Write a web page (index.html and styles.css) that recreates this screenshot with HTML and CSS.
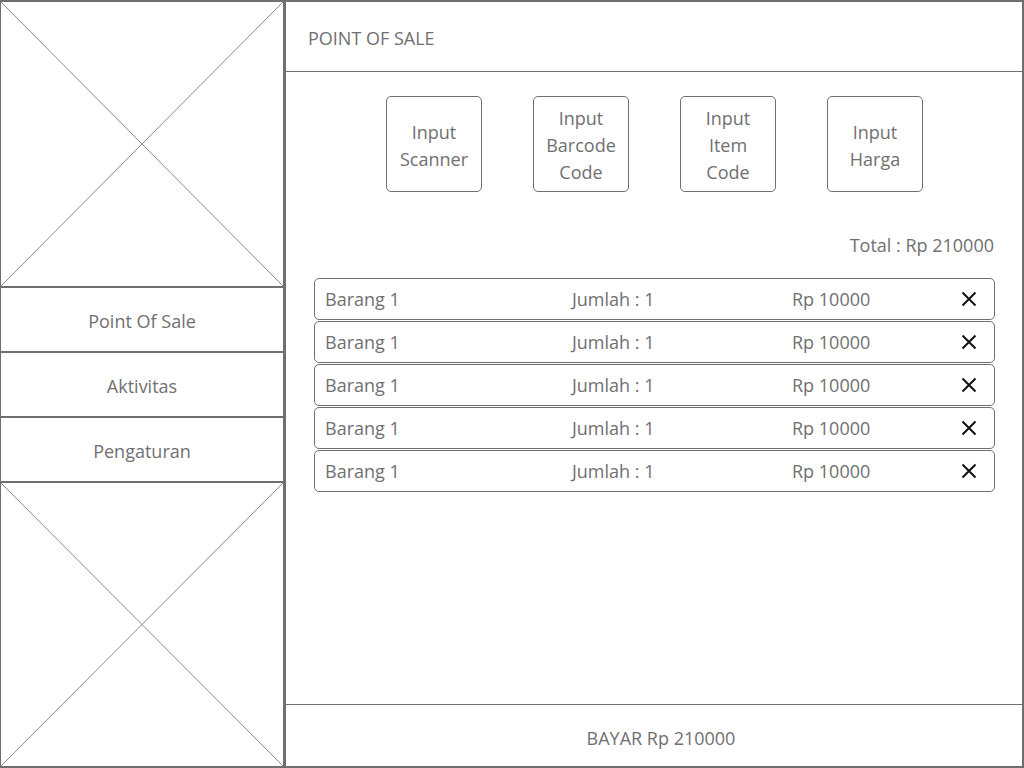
FILE: index.html
```html
<!DOCTYPE html>
<html>
<head>
<meta charset="utf-8">
<link rel="stylesheet" href="styles.css">
</head>
<body>
<div class="app">
  <aside class="sidebar">
    <div class="ph ph-top">
      <svg class="ph-svg" viewBox="0 0 100 100" preserveAspectRatio="none"><line x1="0" y1="0" x2="100" y2="100" vector-effect="non-scaling-stroke"/><line x1="100" y1="0" x2="0" y2="100" vector-effect="non-scaling-stroke"/></svg>
    </div>
    <div class="nav-item">Point Of Sale</div>
    <div class="nav-item">Aktivitas</div>
    <div class="nav-item">Pengaturan</div>
    <div class="ph ph-bottom">
      <svg class="ph-svg" viewBox="0 0 100 100" preserveAspectRatio="none"><line x1="0" y1="0" x2="100" y2="100" vector-effect="non-scaling-stroke"/><line x1="100" y1="0" x2="0" y2="100" vector-effect="non-scaling-stroke"/></svg>
    </div>
  </aside>
  <main class="main">
    <header class="header">POINT OF SALE</header>
    <section class="content">
      <div class="inputs">
        <div class="btn">Input<br>Scanner</div>
        <div class="btn">Input<br>Barcode<br>Code</div>
        <div class="btn">Input<br>Item<br>Code</div>
        <div class="btn">Input<br>Harga</div>
      </div>
      <div class="total">Total : Rp 210000</div>
      <div class="rows">
        <div class="row"><span>Barang 1</span><span>Jumlah : 1</span><span>Rp 10000</span><svg class="x" viewBox="0 0 16 16"><path d="M1.5 1.5L14.5 14.5M14.5 1.5L1.5 14.5"/></svg></div>
        <div class="row"><span>Barang 1</span><span>Jumlah : 1</span><span>Rp 10000</span><svg class="x" viewBox="0 0 16 16"><path d="M1.5 1.5L14.5 14.5M14.5 1.5L1.5 14.5"/></svg></div>
        <div class="row"><span>Barang 1</span><span>Jumlah : 1</span><span>Rp 10000</span><svg class="x" viewBox="0 0 16 16"><path d="M1.5 1.5L14.5 14.5M14.5 1.5L1.5 14.5"/></svg></div>
        <div class="row"><span>Barang 1</span><span>Jumlah : 1</span><span>Rp 10000</span><svg class="x" viewBox="0 0 16 16"><path d="M1.5 1.5L14.5 14.5M14.5 1.5L1.5 14.5"/></svg></div>
        <div class="row"><span>Barang 1</span><span>Jumlah : 1</span><span>Rp 10000</span><svg class="x" viewBox="0 0 16 16"><path d="M1.5 1.5L14.5 14.5M14.5 1.5L1.5 14.5"/></svg></div>
      </div>
    </section>
    <footer class="footer">BAYAR Rp 210000</footer>
  </main>
</div>
</body>
</html>
```

FILE: styles.css
```css
* { box-sizing: border-box; }
html, body { margin: 0; padding: 0; background: #fff; }
body {
  font-family: "Open Sans", "Noto Sans", sans-serif;
  color: #707070;
  font-size: 18px;
}
.app {
  width: 1024px;
  height: 768px;
  display: grid;
  grid-template-columns: 283px 1fr;
  border-top: 2px solid #6f6f6f;
  border-bottom: 2px solid #6f6f6f;
  border-left: 1px solid #6f6f6f;
  border-right: 2px solid #6f6f6f;
}
.sidebar {
  display: flex;
  flex-direction: column;
  border-right: 1px solid #6f6f6f;
  min-height: 0;
}
.ph { position: relative; }
.ph-top { height: 284px; }
.ph-bottom { flex: 1; }
.ph-svg {
  display: block;
  width: 100%;
  height: 100%;
}
.ph-svg line { stroke: #8a8a8a; stroke-width: 1; }
.nav-item {
  height: 65px;
  border-top: 2px solid #6f6f6f;
  display: flex;
  align-items: center;
  justify-content: center;
  font-size: 18px;
  padding-top: 2px;
}
.nav-item + .ph { border-top: 2px solid #6f6f6f; }
.main {
  display: flex;
  flex-direction: column;
  border-left: 2px solid #6f6f6f;
  min-height: 0;
}
.header {
  height: 70px;
  border-bottom: 1px solid #6f6f6f;
  display: flex;
  align-items: center;
  padding-left: 22px;
  padding-top: 2px;
  font-size: 18px;
}
.content {
  flex: 1;
  padding: 24px 27px 0 28px;
}
.inputs {
  display: flex;
  gap: 51px;
  padding-left: 72px;
}
.btn {
  width: 96px;
  height: 96px;
  border: 1px solid #6f6f6f;
  border-radius: 5px;
  display: flex;
  align-items: center;
  justify-content: center;
  text-align: center;
  line-height: 27px;
  font-size: 18px;
  padding-top: 3px;
}
.total {
  margin-top: 40px;
  text-align: right;
  line-height: 27px;
  padding-right: 1px;
}
.rows {
  margin-top: 19px;
  display: flex;
  flex-direction: column;
  gap: 1px;
}
.row {
  height: 42px;
  border: 1px solid #6f6f6f;
  border-radius: 5px;
  display: grid;
  grid-template-columns: 247px 220px 1fr 16px;
  align-items: center;
  padding: 0 17px 0 10px;
}
.x { width: 16px; height: 16px; display: block; }
.x path { stroke: #111; stroke-width: 2; fill: none; }
.footer {
  height: 62px;
  border-top: 1px solid #6f6f6f;
  display: flex;
  align-items: center;
  justify-content: center;
  padding-left: 14px;
  padding-top: 4px;
  font-size: 18px;
}
```
